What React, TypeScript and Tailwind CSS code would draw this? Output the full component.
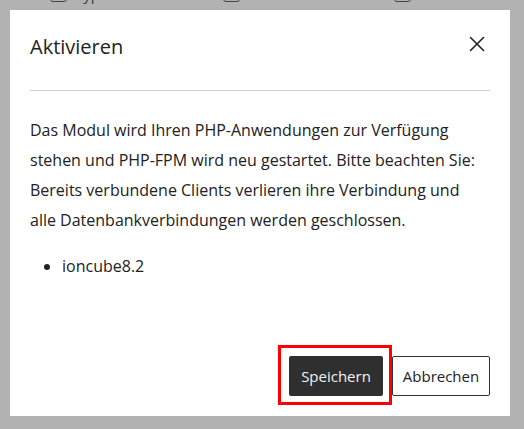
import { X } from "lucide-react";

const behind = [
  { left: "ml-[50px]", label: "Typ" },
  { left: "ml-[108px]", label: "" },
  { left: "ml-[154px]", label: "" },
];

export default function App() {
  return (
    <div
      className="w-[524px] h-[429px] bg-[#b2b2b2] overflow-hidden"
      style={{ fontFamily: '"Open Sans", "Liberation Sans", sans-serif' }}
    >
      {/* dimmed page content peeking out above the dialog */}
      <div className="h-[10px] overflow-hidden">
        <div className="flex items-center -mt-[14px] h-4">
          {behind.map((b, i) => (
            <div key={i} className={`flex items-center gap-2 ${b.left}`}>
              <div className="w-[17px] h-4 rounded-[3px] border border-[#444]" />
              {b.label && (
                <span className="text-[15px] leading-4 text-[#3a3a3a] w-[40px]">{b.label}</span>
              )}
            </div>
          ))}
        </div>
      </div>

      <div className="ml-[10px] w-[500px] h-[406px] bg-white flex flex-col px-5 pb-5">
        <div className="flex items-center justify-between h-[81px] border-b border-[#d0d0d0]">
          <h2 className="text-[20px] text-[#222] leading-none pb-[6px]">Aktivieren</h2>
          <button className="w-7 h-7 flex items-center justify-center -mr-[1px] mb-[13px] text-[#222]">
            <X className="w-[26px] h-[26px]" strokeWidth={1.5} />
          </button>
        </div>

        <div className="flex-1 pt-[24px] text-[16px] leading-[30px] text-[#222]">
          <p className="mb-4 max-w-[450px]">
            Das Modul wird Ihren PHP-Anwendungen zur Verfügung stehen und PHP-FPM wird neu
            gestartet. Bitte beachten Sie: Bereits verbundene Clients verlieren ihre Verbindung
            und alle Datenbankverbindungen werden geschlossen.
          </p>
          <ul className="list-disc pl-8">
            <li>ioncube8.2</li>
          </ul>
        </div>

        <div className="flex justify-end items-center gap-[9px]">
          <div className="relative">
            <button className="h-10 w-[94px] rounded-[2px] bg-[#2f2f2f] text-[#f2f2f2] text-[15px]">
              Speichern
            </button>
            <div className="absolute -top-[11px] -left-[11px] -right-[9px] -bottom-[9px] border-[3px] border-[#ff0000] pointer-events-none" />
          </div>
          <button className="h-10 w-[98px] rounded-[2px] border border-[#333] bg-white text-[#222] text-[15px]">
            Abbrechen
          </button>
        </div>
      </div>
    </div>
  );
}
